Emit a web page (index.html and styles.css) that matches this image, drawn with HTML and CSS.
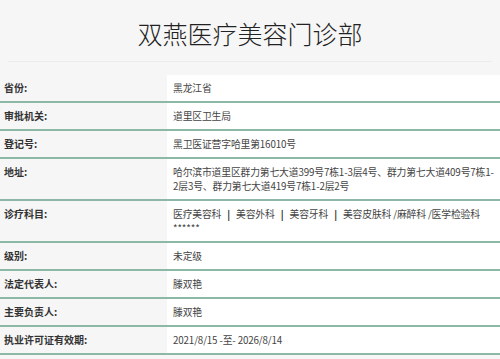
FILE: index.html
```html
<!DOCTYPE html>
<html lang="zh-CN">
<head>
    <meta charset="UTF-8">
    <meta name="viewport" content="width=device-width, initial-scale=1.0">
    <title>双燕医疗美容门诊部</title>
    <link rel="stylesheet" href="styles.css">
</head>
<body>
    <div class="header">
        <h1>双燕医疗美容门诊部</h1>
    </div>

    <table class="info">
        <tr>
            <td class="label">省份:</td>
            <td class="value">黑龙江省</td>
        </tr>
        <tr>
            <td class="label">审批机关:</td>
            <td class="value">道里区卫生局</td>
        </tr>
        <tr>
            <td class="label">登记号:</td>
            <td class="value">黑卫医证营字哈里第16010号</td>
        </tr>
        <tr>
            <td class="label">地址:</td>
            <td class="value">哈尔滨市道里区群力第七大道399号7栋1-3层4号、群力第七大道409号7栋1-2层3号、群力第七大道419号7栋1-2层2号</td>
        </tr>
        <tr>
            <td class="label">诊疗科目:</td>
            <td class="value">医疗美容科 <b class="sep">|</b> 美容外科 <b class="sep">|</b> 美容牙科 <b class="sep">|</b> 美容皮肤科 /麻醉科 /医学检验科<br>******</td>
        </tr>
        <tr>
            <td class="label">级别:</td>
            <td class="value">未定级</td>
        </tr>
        <tr>
            <td class="label">法定代表人:</td>
            <td class="value">滕双艳</td>
        </tr>
        <tr>
            <td class="label">主要负责人:</td>
            <td class="value">滕双艳</td>
        </tr>
        <tr>
            <td class="label">执业许可证有效期:</td>
            <td class="value">2021/8/15 -至- 2026/8/14</td>
        </tr>
    </table>
</body>
</html>
```

FILE: styles.css
```css
body {
    margin: 0;
    background-color: #f6f6f6;
    font-family: "Noto Sans CJK SC", "Noto Sans", sans-serif;
    color: #333;
}
.header {
    margin: 0 8px;
    padding: 18px 0 13px;
    border-bottom: 1px solid #ececec;
}
h1 {
    margin: 0;
    text-align: center;
    font-size: 25px;
    line-height: 30px;
    font-weight: 300;
    color: #222;
}
.info {
    width: 100%;
    margin-top: 13px;
    border-collapse: collapse;
    font-size: 10px;
    line-height: 14px;
}
.info td {
    vertical-align: top;
    border-bottom: 2px solid #8db7a7;
}
.label {
    width: 159px;
    padding: 6px 4px;
    font-weight: bold;
    background-color: #f6f6f6;
}
.value {
    padding: 6px 2px 6px 6px;
    background-color: #fff;
    color: #444;
    font-size: 9.8px;
    letter-spacing: -0.15px;
}
.sep {
    margin: 0 4px;
    color: #222;
}
```
